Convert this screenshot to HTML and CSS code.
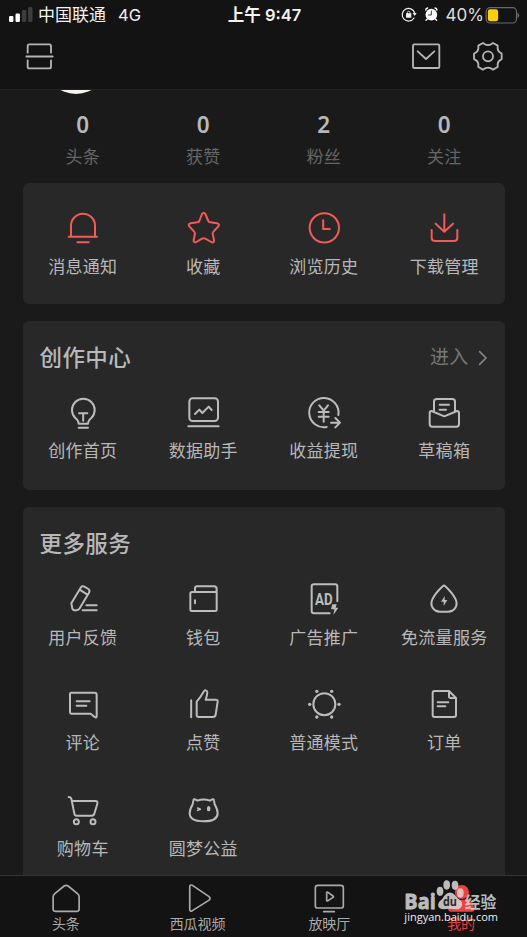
FILE: index.html
```html
<!DOCTYPE html>
<html lang="zh-CN">
<head>
<meta charset="utf-8">
<title>我的</title>
<link rel="stylesheet" href="styles.css">
</head>
<body>
<header class="header">
  <div class="status">
    <div class="status-left">
      <svg class="signal" viewBox="0 0 24 16"><rect x="0" y="10" width="4.4" height="6" rx="1.2" fill="#fff"/><rect x="6.5" y="7.6" width="4.4" height="8.4" rx="1.2" fill="#fff"/><rect x="12.9" y="4" width="4.4" height="12" rx="1.2" fill="#3c3c3c"/><rect x="19.1" y="1" width="4.4" height="15" rx="1.2" fill="#3c3c3c"/></svg>
      <span class="carrier">中国联通</span><span class="network">4G</span>
    </div>
    <div class="clock">上午 9:47</div>
    <div class="status-right">
      <svg class="status-icons" viewBox="416 15 114 54">
        <g fill="none" stroke="#eee" stroke-width="3.6"><path d="M455 54a19 19 0 1 1 2-15"/><path d="M435 41v-3a4 4 0 0 1 8 0v3" stroke-width="2.5"/></g>
        <path d="M431 40h16v13h-16zM451 39h12l-6 9z" fill="#eee"/>
        <circle cx="507" cy="44" r="17.5" fill="#fff"/><path d="M490 30q1-5 6-6M518 24q5 1 6 6M495 57l-4 4M519 57l4 4" stroke="#fff" stroke-width="4" fill="none"/><path d="M507 33v12h-9" fill="none" stroke="#131313" stroke-width="2.5"/>
      </svg>
      <span class="percent">40%</span>
      <svg class="battery" viewBox="667 14 104 54"><rect x="670" y="19" width="91" height="46" rx="12" fill="none" stroke="#6b6b6b" stroke-width="3.5"/><rect x="675" y="24" width="31" height="36" rx="7" fill="#fdd00b"/><path d="M764 34q5 2 5 8t-5 8z" fill="#6b6b6b"/></svg>
    </div>
  </div>
  <nav class="topnav">
    <svg class="nav-icon scan" viewBox="72 120 96 96"><path d="M83 158v-20q0-5 5-5h60q5 0 5 5v20M79 169.500h79M83 181v19q0 5 5 5h60q5 0 5-5v-19"/></svg>
    <svg class="nav-icon mail" viewBox="440 120 96 96"><rect x="449" y="133" width="79" height="71" rx="4"/><path d="M463 154l25 23 25-23"/></svg>
    <svg class="nav-icon" viewBox="626 120 96 96"><path d="M659 129L665 133Q674 137 683 133L689 129L703 137L703 146Q704 155 713 159L715 161V177L713 179Q704 183 703 192L703 201L689 209L683 205Q674 201 665 205L659 209L645 201L645 192Q644 183 635 179L632 177V161L635 159Q644 155 645 146L645 137Z"/><circle cx="674" cy="169" r="15"/></svg>
  </nav>
</header>
<main class="content">
  <svg class="avatar" viewBox="0 0 64 4"><circle cx="32" cy="-28" r="32" fill="#f6f3ea"/></svg>
  <section class="grid stats">
    <div class="stat"><b>0</b><span>头条</span></div>
    <div class="stat"><b>0</b><span>获赞</span></div>
    <div class="stat"><b>2</b><span>粉丝</span></div>
    <div class="stat"><b>0</b><span>关注</span></div>
  </section>
  <section class="card quick">
    <div class="grid">
      <div class="tile red"><svg viewBox="194 330 108 108"><path d="M212 409v-32a36 36 0 0 1 72 0v32M205 410.500h85M231 427h34"/></svg><span>消息通知</span></div>
      <div class="tile red"><svg viewBox="556 330 108 108"><path d="M607 342q5-7 10 0l9 21q2 4 6 4l20 3q9 2 4 9l-14 15q-3 3-3 7l4 19q1 10-8 6l-18-10q-5-2-10 0l-17 10q-9 3-8-6l4-19q0-4-3-7l-14-15q-5-7 4-9l20-3q4 0 6-4z"/></svg><span>收藏</span></div>
      <div class="tile red"><svg viewBox="128 330 108 108"><circle cx="183" cy="383.500" r="44"/><path d="M179.500 361v26h20"/></svg><span>浏览历史</span></div>
      <div class="tile red"><svg viewBox="490 330 108 108"><path d="M545 343v51M519 371l26 24 26-24M507 390v23q0 10 10 10h57q10 0 10-10v-23"/></svg><span>下载管理</span></div>
    </div>
  </section>
  <section class="card creation">
    <div class="card-head"><h2>创作中心</h2><a class="enter">进入<svg viewBox="646 90 30 48"><path d="M651 95l19 19-19 19"/></svg></a></div>
    <div class="grid">
      <div class="tile"><svg viewBox="194 225 108 108"><path d="M235 311q-1-11-10-17a34 34 0 1 1 48 0q-9 6-10 17zM235 323.500h28M236 280h25M248.500 280v22"/></svg><span>创作首页</span></div>
      <div class="tile"><svg viewBox="556 225 108 108"><rect x="569" y="235" width="86" height="68" rx="10"/><path d="M566 319h91M586 282l13-13 9 10 19-19 9 10"/></svg><span>数据助手</span></div>
      <div class="tile"><svg viewBox="128 225 108 108"><path d="M190 321a44 44 0 1 1 35-36M168 256l13 16 13-16M181 272v33M166 276h30M166 290h30M203 308h27M216 294l14 14-14 14"/></svg><span>收益提现</span></div>
      <div class="tile"><svg viewBox="490 225 108 108"><path d="M514 275v-30q0-8 8-8h47q8 0 8 8v30M507 273q-6 0-6 6v33q0 8 8 8h72q8 0 8-8v-33q0-6-6-6l-38 16zM531 254h28M531 269h19"/></svg><span>草稿箱</span></div>
    </div>
  </section>
  <section class="card services">
    <div class="card-head"><h2>更多服务</h2></div>
    <div class="grid">
      <div class="tile"><svg viewBox="194 246 108 108"><path d="M213 310l28-47q4-7 11-3l12 7q6 4 2 11l-28 47q-4 6-11 6-9 1-11-5zM238 269l22 14M258 316h31M247 331h42"/></svg><span>用户反馈</span></div>
      <div class="tile"><svg viewBox="556 246 108 108"><path d="M586 276v-11q0-6 6-6h51q8 0 8 8v62q0 4-4 4h-71q-4 0-4-4v-48q0-5 5-5h68q6 0 6-6M586 301v9"/></svg><span>钱包</span></div>
      <div class="tile"><svg viewBox="128 246 108 108"><path d="M199 340h-47q-7 0-7-7v-73q0-7 7-7h63q7 0 7 7v44"/><text class="ad-text" x="155" y="314" textLength="53" lengthAdjust="spacingAndGlyphs">AD</text><path class="solid" d="M207 313h13l-3 10h8l-15 22 3-17h-10z"/></svg><span>广告推广</span></div>
      <div class="tile"><svg viewBox="490 246 108 108"><path d="M540 259q4-4 8 0 21 20 30 37c11 22-4 39-22 39h-24c-18 0-33-17-22-39q9-17 30-37z"/><path class="solid" d="M546 288v12h8l-11 18v-13h-8z"/></svg><span>免流量服务</span></div>
      <div class="tile"><svg viewBox="194 21 108 108"><path d="M213 38h70q6 0 6 6v66q-1 4-6 1l-12-10h-58q-4 0-4-4V42q0-4 4-4zM229 64h39M229 77h29"/></svg><span>评论</span></div>
      <div class="tile"><svg viewBox="556 21 108 108"><path d="M574.500 61v51M591 65v40q0 6 6 6h43q7 0 8-7l6-39q1-6-6-6h-30q4-11 5-22c0-7-8-8-11-2q-10 17-21 30z"/></svg><span>点赞</span></div>
      <div class="tile"><svg viewBox="128 21 108 108"><circle cx="183" cy="72.500" r="33"/><g class="dots"><circle cx="139" cy="73" r="5"/><circle cx="227" cy="73" r="5"/><circle cx="160.500" cy="34" r="5"/><circle cx="205" cy="34" r="5"/><circle cx="160.500" cy="111" r="5"/><circle cx="205" cy="111" r="5"/></g></svg><span>普通模式</span></div>
      <div class="tile"><svg viewBox="490 21 108 108"><path d="M559 33h-43q-6 0-6 6v66q0 6 6 6h58q6 0 6-6V54zM559 33v16q0 5 5 5h16M525 67h32M525 79h23"/></svg><span>订单</span></div>
      <div class="tile"><svg viewBox="194 336 108 108"><path d="M205 348q6 0 8 5l9 45q1 6 7 6h45q7 0 8-6l9-30q2-8-6-8h-70"/><circle cx="228" cy="422" r="7.500"/><circle cx="278" cy="422" r="7.500"/></svg><span>购物车</span></div>
      <div class="tile"><svg viewBox="556 336 108 108"><path d="M579 370l2-11q1-7 7-3l5 3q19-7 38 0l5-3q6-4 7 3l2 11c4 7 9 16 9 27-1 17-19 24-42 24s-42-7-42-24c0-11 5-20 9-27z"/><path d="M594 381l8 4-8 3" stroke-width="5"/><ellipse class="solid" cx="627" cy="383" rx="5.500" ry="8"/></svg><span>圆梦公益</span></div>
    </div>
  </section>
</main>
<footer class="tabbar">
  <div class="tab"><svg viewBox="143.600 46 108 108"><path d="M192 64q6-4 12 0l28 23q5 4 5 10v36q0 7-7 7h-64q-7 0-7-7v-36q0-6 5-10z"/></svg><span>头条</span></div>
  <div class="tab"><svg viewBox="538.800 46 108 108"><path d="M568 66q0-7 8-4l49 33q8 6 0 12l-49 31q-8 4-8-4z"/></svg><span>西瓜视频</span></div>
  <div class="tab"><svg viewBox="145 46 108 108"><rect x="158" y="62" width="84" height="68" rx="7"/><path d="M192 84v23q0 3 4 1l15-10q3-2 0-4l-15-11q-4-2-4 1zM183 141h32"/></svg><span>放映厅</span></div>
  <div class="tab active"><svg viewBox="540.400 46 108 108"><circle cx="597" cy="82" r="21"/><path d="M556 134q2-24 29-29h22q25 5 28 29 0 7-7 7h-65q-7 0-7-7z"/></svg><span>我的</span></div>
  <svg class="watermark" viewBox="410 35 308 154">
    <g class="mark">
      <text class="brand" x="423" y="134" textLength="94" lengthAdjust="spacingAndGlyphs">Bai</text>
      <ellipse cx="530" cy="81" rx="10" ry="14"/><ellipse cx="550" cy="62" rx="10" ry="14"/><ellipse cx="575" cy="63" rx="10" ry="14"/><ellipse cx="591" cy="86" rx="10" ry="14"/>
      <path d="M543 94q17-19 34 0 8 10 16 16c9 12 0 26-15 25q-18-3-36 0c-16 1-23-12-13-24q8-6 14-17z"/>
      <text class="brand-du" x="539" y="126" textLength="42" lengthAdjust="spacingAndGlyphs">du</text>
      <text class="brand-cn" x="604" y="131" textLength="95" lengthAdjust="spacingAndGlyphs">经验</text>
      <text class="url" x="423" y="171" textLength="281" lengthAdjust="spacingAndGlyphs">jingyan.baidu.com</text>
    </g>
  </svg>
</footer>
</body>
</html>
```
FILE: styles.css
```css
* { box-sizing: border-box; }
body {
  margin: 0;
  width: 527px;
  height: 937px;
  overflow: hidden;
  display: flex;
  flex-direction: column;
  background: #1a1a1a;
  color: #b8b8b8;
  font-family: Inter, "Noto Sans CJK SC", sans-serif;
}
svg { display: block; flex: none; fill: none; stroke-linecap: round; stroke-linejoin: round; }
.header { height: 90px; flex: none; background: #131313; border-bottom: 1px solid #232323; }
.status {
  display: grid;
  grid-template-columns: 1fr auto 1fr;
  align-items: center;
  height: 29px;
  padding: 1px 7px 0 9px;
  color: #f2f2f2;
  font-size: 17px;
  line-height: 28px;
  white-space: nowrap;
}
.status-left, .status-right { display: flex; align-items: center; }
.status-right { justify-content: flex-end; }
.signal { width: 24px; height: 16px; margin: -2px 6px 0 0; }
.carrier { margin-left: -1px; }
.network { margin-left: 12px; font-size: 16.5px; }
.clock { font-weight: 600; font-size: 16.5px; }
.status-icons { width: 38px; height: 18px; margin: -2px 7px 0 0; }
.percent { font-size: 17px; width: 39.5px; color: #ddd; }
.battery { width: 35px; height: 18px; margin-top: -1px; }
.topnav { display: flex; align-items: center; height: 54px; padding: 0 23.500px 0 24px; }
.nav-icon { width: 32px; height: 32px; stroke: #b5b5b5; stroke-width: 5.500; }
.mail { margin-left: auto; margin-right: 30px; }
.content { flex: 1; min-height: 0; overflow: hidden; padding: 0 22.500px; }
.avatar { width: 64px; height: 4px; margin-left: 21px; overflow: hidden; }
.grid { display: grid; grid-template-columns: repeat(4, 1fr); }
.stats { height: 89px; padding-top: 17px; align-content: start; }
.stat { display: flex; flex-direction: column; align-items: center; }
.stat b { font-family: "Noto Sans", sans-serif; font-size: 22.500px; font-weight: 600; line-height: 28px; }
.stat span { margin-top: 6px; font-size: 17px; letter-spacing: .3px; line-height: 24px; color: #666; }
.card { background: #282828; border-radius: 6px; margin-bottom: 17px; }
.quick { height: 121px; padding-top: 27px; }
.quick .tile { gap: 9px; }
.creation { height: 169px; }
.services { height: 400px; }
.card-head { display: flex; align-items: center; justify-content: space-between; height: 74px; padding: 0 17px; }
h2 { margin: -1px 0 0; font-size: 22.500px; font-weight: 500; letter-spacing: .4px; line-height: 32px; }
.enter { display: flex; align-items: center; gap: 9px; color: #777; font-size: 19px; letter-spacing: .3px; line-height: 28px; }
.enter svg { width: 10px; height: 16px; stroke: #858585; stroke-width: 5; }
.tile { display: flex; flex-direction: column; align-items: center; gap: 8px; }
.services .grid { row-gap: 36.400px; }
.tile > svg { width: 36px; height: 36px; stroke: #bcbcbc; stroke-width: 6; }
.tile > span { font-size: 17px; letter-spacing: .3px; line-height: 24px; height: 24px; white-space: nowrap; }
.services .tile > svg { margin-top: 1px; }
.tile.red > svg { stroke: #f25b57; }
.tile .solid, .tile .dots { fill: #bcbcbc; stroke: none; }
.ad-text { font: 700 49px Roboto, sans-serif; fill: #bcbcbc; stroke: none; }
.tabbar {
  position: relative;
  display: grid;
  grid-template-columns: repeat(4, 1fr);
  height: 62px;
  flex: none;
  background: #131313;
  border-top: 1px solid #333;
}
.tab { display: flex; flex-direction: column; align-items: center; padding-top: 4px; }
.tab svg { width: 36px; height: 36px; stroke: #aaa; stroke-width: 5; }
.tab span { margin-top: -1px; font-size: 14px; line-height: 18px; color: #aaa; }
.tab.active svg { fill: #f04142; stroke: none; }
.tab.active span { color: #e04141; }
.tabbar .watermark { position: absolute; left: 399.700px; top: 0; width: 102.700px; height: 51.300px; }
.mark { fill: #dadada; fill-opacity: .85; }
.brand { font: 700 66px "Open Sans", sans-serif; stroke: #c2c2c2; stroke-width: 2.5; }
.brand-du { font: 700 36px "Open Sans", sans-serif; fill: #282828; fill-opacity: 1; }
.brand-cn { font: 700 48px "Noto Sans CJK SC", sans-serif; }
.url { font: 400 32px "Open Sans", sans-serif; fill: #eee; fill-opacity: 1; }
```
